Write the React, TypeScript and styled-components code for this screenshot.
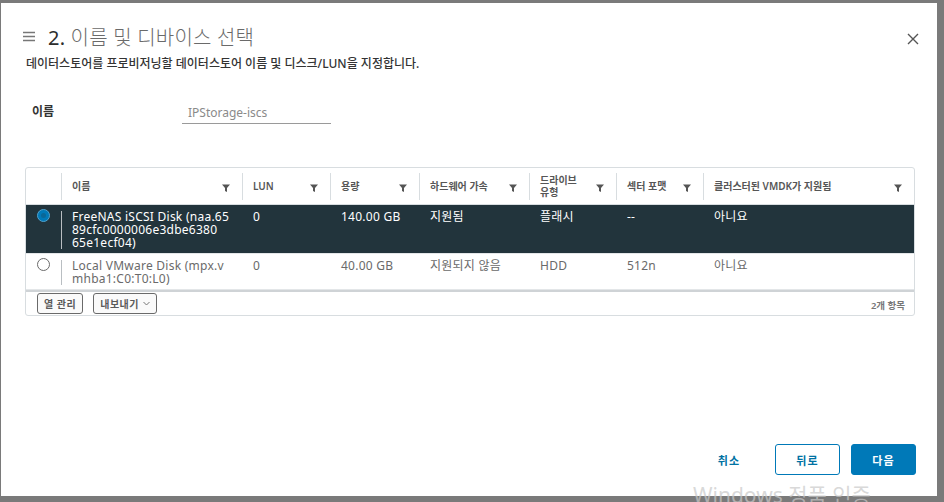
import React from "react";
import styled, { createGlobalStyle } from "styled-components";

const GlobalStyle = createGlobalStyle`
  html, body {
    margin: 0;
    padding: 0;
    width: 944px;
    height: 502px;
    overflow: hidden;
    font-family: "Noto Sans", "Noto Sans CJK KR", sans-serif;
  }
`;

const Backdrop = styled.div`
  position: relative;
  width: 944px;
  height: 502px;
  background: #7a7a7a;
  padding: 3px 7px 6px 1px;
  box-sizing: border-box;
`;

const Dialog = styled.div`
  width: 100%;
  height: 100%;
  background: #ffffff;
  box-sizing: border-box;
  padding: 20px 21px 0 24px;
  display: flex;
  flex-direction: column;
`;

const TitleRow = styled.div`
  display: flex;
  align-items: center;
  height: 26px;
  margin-left: -2px;
`;

const MenuIcon = styled.svg`
  width: 12px;
  height: 11px;
  margin-right: 13px;
`;

const Title = styled.h1`
  margin: 0;
  font-size: 20px;
  font-weight: 300;
  color: #6a6a6a;
  flex: 1;
  letter-spacing: 0.2px;
  b {
    font-weight: 400;
    color: #2d2d2d;
  }
`;

const CloseIcon = styled.svg`
  width: 12px;
  height: 12px;
  margin-right: -3px;
  margin-top: 5px;
`;

const Subtitle = styled.p`
  margin: 7px 0 0 1px;
  font-size: 12px;
  font-weight: 500;
  color: #333;
  line-height: 16px;
`;

const NameRow = styled.div`
  display: flex;
  align-items: flex-start;
  margin-top: 32px;
  padding-left: 7px;
`;

const Label = styled.label`
  width: 150px;
  font-size: 12px;
  font-weight: 700;
  color: #333;
  line-height: 16px;
`;

const NameInput = styled.div`
  width: 143px;
  padding: 2px 0 3px 6px;
  border-bottom: 1px solid #9a9a9a;
  font-size: 12px;
  color: #8a8a8a;
  line-height: 14px;
`;

const Table = styled.div`
  margin-top: 43px;
  width: 890px;
  border: 1px solid #d8dde0;
  border-radius: 3px;
  box-sizing: border-box;
`;

const Grid = styled.div`
  display: grid;
  grid-template-columns: 35px 181px 88px 89px 110px 87px 87px 1fr;
`;

const HeadCell = styled.div<{ $first?: boolean }>`
  position: relative;
  height: 36px;
  display: flex;
  align-items: center;
  justify-content: space-between;
  padding: 0 12px 0 11px;
  font-size: 10px;
  font-weight: 600;
  color: #565656;
  line-height: 12px;
  border-bottom: 1px solid #d8dde0;
  &::before {
    content: "";
    display: ${({ $first }) => ($first ? "none" : "block")};
    position: absolute;
    left: 0;
    top: 5px;
    bottom: 4px;
    width: 1px;
    background: #d8dde0;
  }
`;

const FilterIcon = styled.svg`
  width: 8px;
  height: 8px;
  flex-shrink: 0;
  margin-top: 3px;
`;

const Cell = styled.div<{ $selected?: boolean; $sep?: boolean }>`
  position: relative;
  padding: 5px 10px 4px 11px;
  font-size: 12px;
  line-height: 13px;
  letter-spacing: 0.25px;
  white-space: pre-line;
  color: ${({ $selected }) => ($selected ? "#ffffff" : "#6a6a6a")};
  background: ${({ $selected }) => ($selected ? "#22343c" : "#ffffff")};
  font-weight: 400;
  border-bottom: 1px solid #e3e6e8;
  &::before {
    content: "";
    display: ${({ $sep }) => ($sep ? "block" : "none")};
    position: absolute;
    left: 0;
    top: 6px;
    bottom: 4px;
    width: 1px;
    background: #b9bec2;
  }
`;

const RadioCell = styled(Cell)`
  padding: 4px 0 0 11px;
`;

const Radio = styled.span<{ $checked?: boolean }>`
  display: block;
  width: 13px;
  height: 13px;
  border-radius: 50%;
  box-sizing: border-box;
  background: ${({ $checked }) => ($checked ? "#0079b8" : "#ffffff")};
  border: 1px solid ${({ $checked }) => ($checked ? "#4fa3cf" : "#6a6a6a")};
  box-shadow: ${({ $checked }) => ($checked ? "inset 0 0 0 3px #0079b8, inset 0 0 0 6px #0a6797" : "none")};
`;

const Footer = styled.div`
  border-top: 2px solid #cfd3d6;
  height: 22px;
  display: flex;
  align-items: flex-start;
  padding: 1px 9px 0 11px;
  gap: 10px;
`;

const SmallButton = styled.button`
  height: 21px;
  padding: 0 6px;
  border: 1px solid #6a6a6a;
  border-radius: 3px;
  background: #fafafa;
  font-family: inherit;
  font-size: 10px;
  font-weight: 600;
  color: #5a5a5a;
  display: flex;
  align-items: center;
  gap: 4px;
  letter-spacing: 0.5px;
`;

const Count = styled.span`
  margin-left: auto;
  font-size: 9.5px;
  font-weight: 600;
  color: #777;
  margin-top: 5px;
`;

const Actions = styled.div`
  margin-top: auto;
  margin-bottom: 21px;
  display: flex;
  justify-content: flex-end;
  gap: 11px;
`;

const ActionButton = styled.button<{ $variant: "flat" | "outline" | "solid" }>`
  height: 31px;
  width: ${({ $variant }) => ($variant === "flat" ? "70px" : "65px")};
  border-radius: 3px;
  font-family: inherit;
  font-size: 11px;
  font-weight: 700;
  letter-spacing: 1.2px;
  border: 1px solid ${({ $variant }) => ($variant === "flat" ? "transparent" : "#0079b8")};
  background: ${({ $variant }) => ($variant === "solid" ? "#0079b8" : "#ffffff")};
  color: ${({ $variant }) => ($variant === "solid" ? "#ffffff" : "#0072a3")};
`;

const Watermark = styled.div`
  position: absolute;
  left: 693px;
  top: 479px;
  font-size: 21px;
  color: rgba(200, 200, 200, 0.7);
  white-space: nowrap;
  pointer-events: none;
`;

const Filter = () => (
  <FilterIcon viewBox="0 0 8 8">
    <path d="M0 0.5 H8 L5 4 V8 L3 7 V4 Z" fill="#555" />
  </FilterIcon>
);

const headers = [
  "이름",
  "LUN",
  "용량",
  "하드웨어 가속",
  "드라이브\n유형",
  "섹터 포맷",
  "클러스터된 VMDK가 지원됨",
];

const rows = [
  {
    selected: true,
    cells: ["FreeNAS iSCSI Disk (naa.65\n89cfc0000006e3dbe6380\n65e1ecf04)", "0", "140.00 GB", "지원됨", "플래시", "--", "아니요"],
  },
  {
    selected: false,
    cells: ["Local VMware Disk (mpx.v\nmhba1:C0:T0:L0)", "0", "40.00 GB", "지원되지 않음", "HDD", "512n", "아니요"],
  },
];

export default function App() {
  return (
    <>
      <GlobalStyle />
      <Backdrop>
        <Dialog>
          <TitleRow>
            <MenuIcon viewBox="0 0 12 11">
              <path d="M0 1.5 H12 M0 5.5 H12 M0 9.5 H12" stroke="#777" strokeWidth="1.4" />
            </MenuIcon>
            <Title>
              <b>2.</b> 이름 및 디바이스 선택
            </Title>
            <CloseIcon viewBox="0 0 12 12">
              <path d="M1 1 L11 11 M11 1 L1 11" stroke="#555" strokeWidth="1.4" />
            </CloseIcon>
          </TitleRow>
          <Subtitle>데이터스토어를 프로비저닝할 데이터스토어 이름 및 디스크/LUN을 지정합니다.</Subtitle>
          <NameRow>
            <Label>이름</Label>
            <NameInput>IPStorage-iscs</NameInput>
          </NameRow>
          <Table>
            <Grid>
              <HeadCell $first />
              {headers.map((h) => (
                <HeadCell key={h}>
                  <span style={{ whiteSpace: "pre-line" }}>{h}</span>
                  <Filter />
                </HeadCell>
              ))}
              {rows.map((row, i) => (
                <React.Fragment key={i}>
                  <RadioCell $selected={row.selected}>
                    <Radio $checked={row.selected} />
                  </RadioCell>
                  {row.cells.map((c, j) => (
                    <Cell key={j} $selected={row.selected} $sep={j === 0}>
                      {c}
                    </Cell>
                  ))}
                </React.Fragment>
              ))}
            </Grid>
            <Footer>
              <SmallButton>열 관리</SmallButton>
              <SmallButton>
                내보내기
                <svg width="7" height="5" viewBox="0 0 7 5">
                  <path d="M0.5 1 L3.5 4 L6.5 1" stroke="#777" fill="none" strokeWidth="1" />
                </svg>
              </SmallButton>
              <Count>2개 항목</Count>
            </Footer>
          </Table>
          <Actions>
            <ActionButton $variant="flat">취소</ActionButton>
            <ActionButton $variant="outline">뒤로</ActionButton>
            <ActionButton $variant="solid">다음</ActionButton>
          </Actions>
        </Dialog>
        <Watermark>Windows 정품 인증</Watermark>
      </Backdrop>
    </>
  );
}
